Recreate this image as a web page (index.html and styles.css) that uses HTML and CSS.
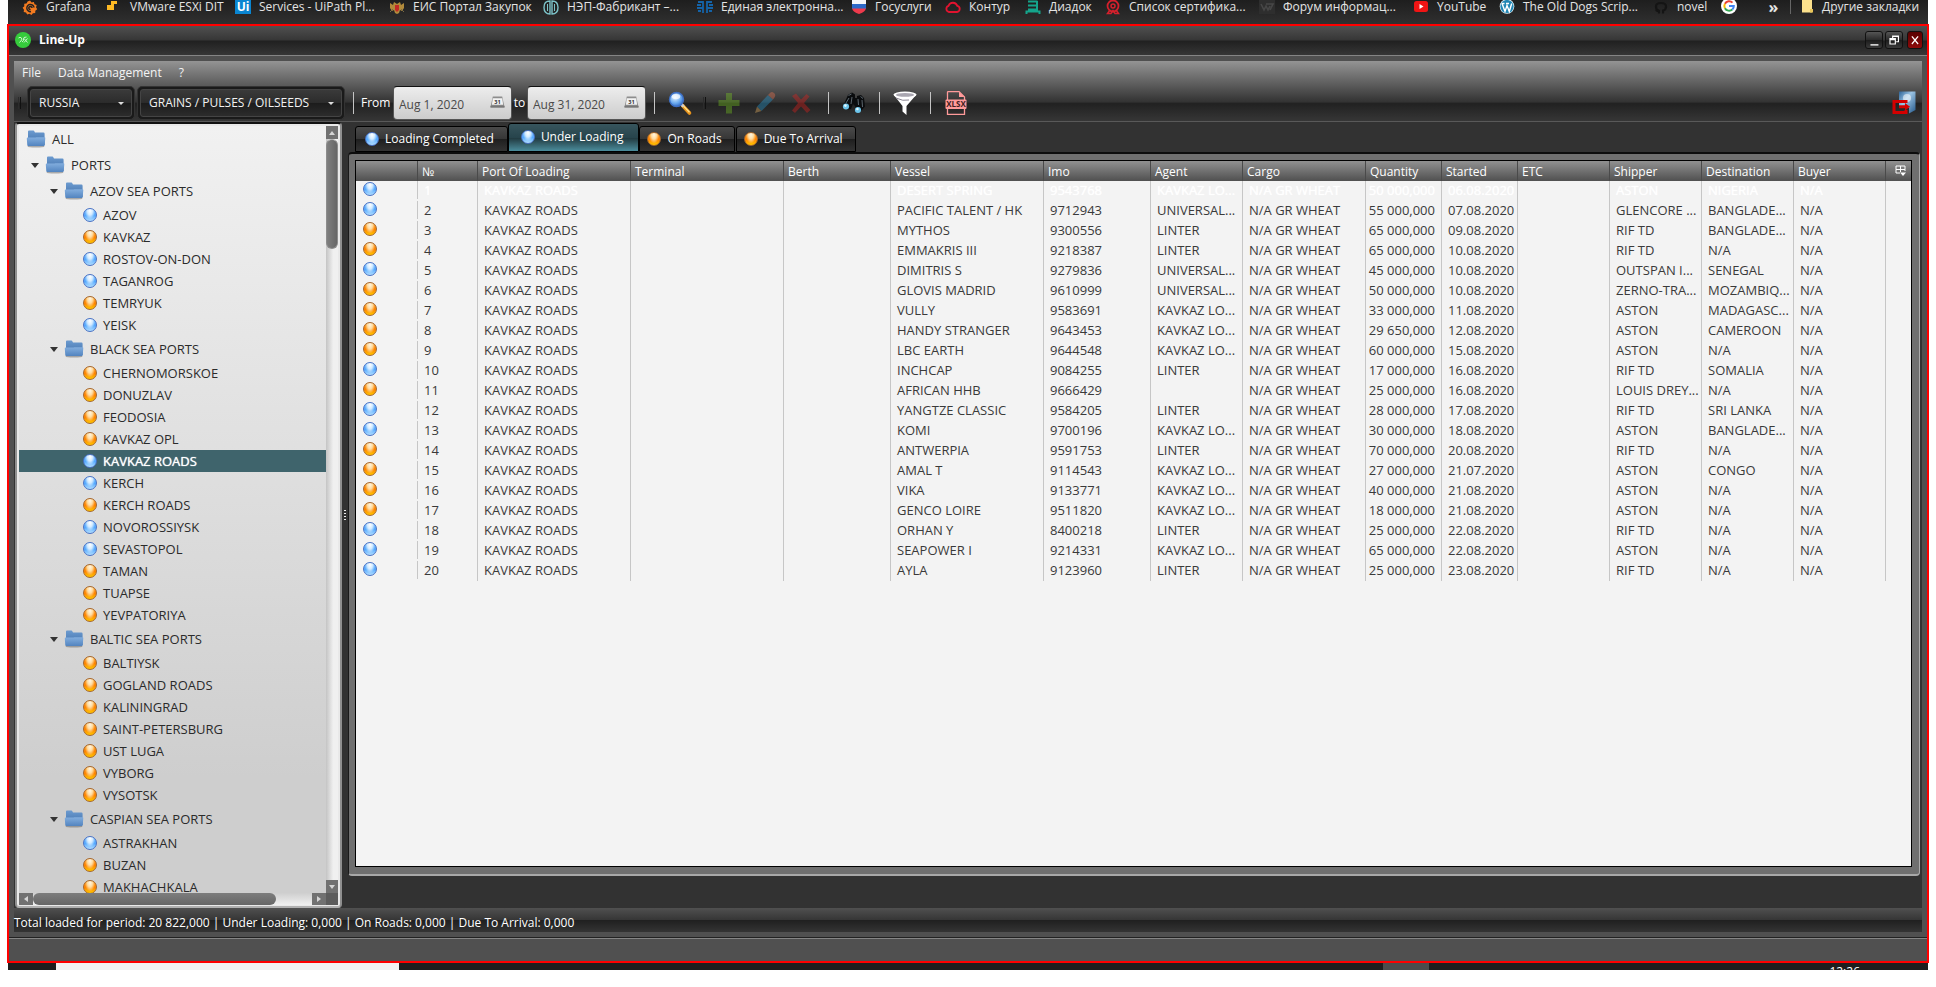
FILE: index.html
```html
<!DOCTYPE html>
<html lang="en">
<head>
<meta charset="utf-8">
<title>Line-Up</title>
<link rel="stylesheet" href="styles.css">
</head>
<body>
<svg class="defs" aria-hidden="true">
  <defs>
    <linearGradient id="gBack" x1="0" y1="0" x2="0" y2="1"><stop offset="0" stop-color="#6c9bd0"/><stop offset="1" stop-color="#3f6ea8"/></linearGradient>
    <linearGradient id="gFront" x1="0" y1="0" x2="0" y2="1"><stop offset="0" stop-color="#83aede"/><stop offset="1" stop-color="#5284bf"/></linearGradient>
    <radialGradient id="gLens" cx=".4" cy=".35" r=".7"><stop offset="0" stop-color="#e4f4ff"/><stop offset=".6" stop-color="#6aa9ee"/><stop offset="1" stop-color="#2a62c0"/></radialGradient>
    <linearGradient id="gDoor" x1="0" y1="0" x2="1" y2="1"><stop offset="0" stop-color="#2e6397"/><stop offset=".4" stop-color="#9cc4e4"/><stop offset="1" stop-color="#24588a"/></linearGradient>
    <symbol id="folder" viewBox="0 0 20 18">
      <ellipse cx="10" cy="16.4" rx="8.5" ry="1.2" fill="#555" opacity=".45"/>
      <path d="M2 1.500Q2 .6 3 .6H7.400Q8 .6 8.300 1.200L9 2.600H17.400Q18.600 2.600 18.600 3.800V15H2Z" fill="url(#gBack)"/>
      <path d="M.8 8.400Q.8 7.600 1.600 7.600H8.800Q9.600 7.600 10.200 7.200H18.600Q19.400 7.200 19.300 8L18.700 15.200Q18.600 16 17.800 16H2.200Q1.400 16 1.300 15.200Z" fill="url(#gFront)"/>
    </symbol>
  </defs>
</svg>

<nav class="bookmarks" aria-label="Bookmarks">
  <a href="#"><svg viewBox="0 0 16 16"><path d="M8 .6l1.600 1.800 2.300-.5.6 2.300 2.200.9-.7 2.200 1.200 2-1.900 1.400-.1 2.400-2.300.2L9.500 15 7.500 13.800 5.200 14.600 4 12.600 1.700 12 2 9.700.6 7.800 2.300 6.200 2.200 3.800 4.500 3.400 5.600 1.400Z" fill="#f47b20"/><path d="M12 7.500A3.600 3.600 0 1 0 9 11.600M10 8a1.600 1.600 0 1 0-1.400 1.600" fill="none" stroke="#242424" stroke-width="1.500"/></svg><span>Grafana</span></a>
  <a href="#"><svg viewBox="0 0 16 16"><path d="M5 1H11V4H8V10H1V5H5Z" fill="#fdb924"/></svg><span>VMware ESXi DIT</span></a>
  <a href="#"><b class="fav-ui">Ui</b><span>Services - UiPath Pl...</span></a>
  <a href="#"><svg viewBox="0 0 16 16"><path d="M1 3l3 2 1-3 3 2 3-2 1 3 3-2v5l-2 3-2-1-1 3-2 1-2-1-1-3-2 1-2-3Z" fill="#b18a3b"/><path d="M6 5h4v5l-2 2-2-2Z" fill="#c22a25"/><path d="M1 12l3-3M15 12l-3-3" stroke="#7a6a45"/></svg><span>ЕИС Портал Закупок</span></a>
  <a href="#"><svg viewBox="0 0 16 16"><path d="M7 1Q1 1 1 7.500T7 14ZM9 1Q15 1 15 7.500T9 14Z" fill="none" stroke="#7cc3c9" stroke-width="1.400"/><path d="M4.500 4v7M11.500 4v7" stroke="#7cc3c9"/></svg><span>НЭП-Фабрикант –...</span></a>
  <a href="#"><svg viewBox="0 0 16 16"><path d="M1 2h5v11M15 2h-5v11M0 5h4M16 5h-4M0 8h6M16 8h-6M1 11h3M15 11h-3" fill="none" stroke="#1463a8" stroke-width="1.800"/></svg><span>Единая электронна...</span></a>
  <a href="#"><svg viewBox="0 0 16 16"><path d="M1 0H15V5H1Z" fill="#f4f6fa"/><path d="M1 4H15V9H1Z" fill="#2c68c8"/><path d="M1 8.500H15Q14 12 8 14Q2 12 1 8.500Z" fill="#ee3a4c"/></svg><span>Госуслуги</span></a>
  <a href="#"><svg viewBox="0 0 16 16"><path d="M4 12a3.200 3.200 0 0 1-.4-6.200 4.600 4.600 0 0 1 8.700.1A3.100 3.100 0 0 1 12 12Z" fill="none" stroke="#e2132f" stroke-width="1.800"/></svg><span>Контур</span></a>
  <a href="#"><svg viewBox="0 0 16 16"><path d="M3 1.500H12.500M3 5.500H12.500M3 9.500H12.500M12 1V11M1.500 14V11.500H14.500V14" fill="none" stroke="#14a58c" stroke-width="2"/></svg><span>Диадок</span></a>
  <a href="#"><svg viewBox="0 0 16 16"><circle cx="8" cy="6" r="5.500" fill="none" stroke="#d5202c" stroke-width="1.800"/><circle cx="8" cy="6" r="2" fill="none" stroke="#d5202c" stroke-width="1.500"/><path d="M5 10L2.500 13.500H6L8 10.500 10 13.500h3.500L11 10" fill="none" stroke="#d5202c" stroke-width="1.500"/></svg><span>Список сертифика...</span></a>
  <a href="#"><svg viewBox="0 0 16 16"><path d="M0 0H16V14H0Z" fill="#2e2e2e"/><path d="M2 4l3 6 2-4 2 4 2-4M7 4h7l-3 6" fill="none" stroke="#474747" stroke-width="1.600"/></svg><span>Форум информац...</span></a>
  <a href="#"><svg viewBox="0 0 16 16"><rect x="1" y="1" width="14" height="11" rx="2.500" fill="#f01414"/><path d="M6.500 4L10.500 6.500 6.500 9Z" fill="#fff"/></svg><span>YouTube</span></a>
  <a href="#"><svg viewBox="0 0 16 16"><circle cx="8" cy="6.500" r="7.300" fill="#e8f4fa"/><circle cx="8" cy="6.500" r="6.600" fill="#2186b4"/><path d="M3 3.500l3 8 2-6 2.300 6 2.400-8M2.500 3.500h3M7 3.500h3" fill="none" stroke="#fff" stroke-width="1.400"/></svg><span>The Old Dogs Scrip...</span></a>
  <a href="#"><svg viewBox="0 0 16 16"><path d="M6 13.500V11Q3.500 11.500 3 9.500M10 13.500v-3Q13 10 13 6.500 13 3 8 3T3 6.500Q3 10 6 10.500" fill="none" stroke="#141414" stroke-width="2.200"/></svg><span>novel</span></a>
  <a href="#" aria-label="Google"><svg viewBox="0 0 16 16"><circle cx="8" cy="6" r="8" fill="#fff"/><path d="M11.500 2.600A4.800 4.800 0 0 0 3.900 3.800" fill="none" stroke="#ea4335" stroke-width="2"/><path d="M3.900 3.800a4.800 4.800 0 0 0 0 4.400" fill="none" stroke="#fbbc05" stroke-width="2"/><path d="M3.900 8.200a4.800 4.800 0 0 0 7.400 1.300" fill="none" stroke="#34a853" stroke-width="2"/><path d="M11.300 9.500A4.600 4.600 0 0 0 12.800 6H8" fill="none" stroke="#4285f4" stroke-width="2"/></svg></a>
  <button type="button" class="more">»</button>
  <a href="#" class="other"><svg viewBox="0 0 16 16"><path d="M3 -2H13V12.500H3Z" fill="#fbe08c"/><path d="M11 9h3v3.500h-3Z" fill="#e9c65a"/></svg><span>Другие закладки</span></a>
</nav>

<main class="window">
  <header class="titlebar">
    <svg class="logo" viewBox="0 0 16 16"><circle cx="8" cy="8" r="8" fill="#36cc3c"/><path d="M3.500 6Q5 4.500 6.500 6T4.500 10.500M7 10Q9 9 8.500 7T11.500 5M9 6.500l3.500 4M12.500 6.500L9 10.500" fill="none" stroke="#c9f5cb" stroke-width="1"/></svg>
    <h1>Line-Up</h1>
    <button type="button" class="win-btn" aria-label="Minimize"><svg viewBox="0 0 14 18"><path d="M3 14.500h9" stroke="#fff" stroke-width="1.500"/></svg></button>
    <button type="button" class="win-btn" aria-label="Restore"><svg viewBox="0 0 14 18"><path d="M5.500 7V4.500H12V11H9.500M5 5h7M2.500 7.500h6v6h-6ZM2.500 8.500h6" fill="none" stroke="#fff" stroke-width="1.300"/></svg></button>
    <button type="button" class="win-btn close" aria-label="Close"><svg viewBox="0 0 14 18"><path d="M3.500 5L10.500 13.500M10.500 5L3.500 13.500" stroke="#fff" stroke-width="1.400"/></svg></button>
  </header>

  <div class="client">
    <div class="bars">
      <nav class="menu"><button type="button">File</button><button type="button">Data Management</button><button type="button">?</button></nav>
      <div class="toolbar">
        <i class="grip"></i>
        <span class="combo country"><select aria-label="Country"><option>RUSSIA</option></select></span>
        <span class="combo product"><select aria-label="Product group"><option>GRAINS / PULSES / OILSEEDS</option></select></span>
        <i class="sep"></i>
        <label class="date"><span>From</span><input type="text" value="Aug 1, 2020"><svg viewBox="0 0 16 14"><path d="M3 1h10l2.500 11.500H.5Z" fill="#8d8d8d"/><path d="M3 3h10l1 7H2Z" fill="#f3f3f3"/><path d="M.5 11h15v2H.5Z" fill="#777"/><text x="8" y="9.500" class="cal">31</text></svg></label>
        <label class="date"><span>to</span><input type="text" value="Aug 31, 2020"><svg viewBox="0 0 16 14"><path d="M3 1h10l2.500 11.500H.5Z" fill="#8d8d8d"/><path d="M3 3h10l1 7H2Z" fill="#f3f3f3"/><path d="M.5 11h15v2H.5Z" fill="#777"/><text x="8" y="9.500" class="cal">31</text></svg></label>
        <i class="sep"></i>
        <button type="button" class="tool first" aria-label="Search"><svg viewBox="0 0 24 24"><path d="M14.500 14.500L21.500 22" stroke="#e8931c" stroke-width="3.600" stroke-linecap="round"/><path d="M15.500 15L21.500 21.300" stroke="#ffe28a" stroke-width="1.300"/><path d="M12.500 12.500l3 3" stroke="#ccc" stroke-width="3"/><circle cx="8.500" cy="8.500" r="7" fill="url(#gLens)" stroke="#3e6fc4" stroke-width="1.400"/><ellipse cx="8" cy="5.600" rx="4.200" ry="2.600" fill="#fff" opacity=".7"/></svg></button>
        <i class="grip small"></i>
        <button type="button" class="tool" aria-label="Add" disabled><svg viewBox="0 0 24 24"><path d="M9 2h6v7h7.500v6H15v7.500H9V15H1.500V9H9Z" fill="#7ed321"/></svg></button>
        <button type="button" class="tool" aria-label="Edit" disabled><svg viewBox="0 0 24 24"><path d="M2 22l2-6.500 4.500 4.500Z" fill="#ffc26b"/><path d="M4 15.500L15 4l5 4.500L8.500 20Z" fill="#2ba8e6"/><path d="M15 4l2.500-2.600Q19 .5 21 2t.8 4L20 8.500Z" fill="#ff7b54"/></svg></button>
        <button type="button" class="tool" aria-label="Delete" disabled><svg viewBox="0 0 24 24"><path d="M3 5l4-2.500 5 6L17.500 3l3 2.500L15 12l6.500 7-3.500 3-6-6.500L6 22l-3-2.500L9 12Z" fill="#f0201c"/></svg></button>
        <i class="sep wide"></i>
        <button type="button" class="tool" aria-label="Find"><svg viewBox="0 0 24 24"><path d="M6 4l4-2.500 3 2v3.500h2V5l4-1 3 3 1 8.500-4 4.500h-4l-2-5-2-2-2 5-4 .5-4-3.500Z" fill="#0a0c0e"/><path d="M6.500 4.500l3-1.500M18.500 5.500l2.500 2M7 7l-3 5M16 8l.500 6M10 6l-1 7M20 9l.500 7" stroke="#5c666e" stroke-width="1"/><ellipse cx="4" cy="15.500" rx="3.100" ry="3" fill="#6cc4ea"/><ellipse cx="16" cy="19" rx="3.100" ry="3" fill="#6cc4ea"/><circle cx="3.400" cy="14.600" r="1.300" fill="#e4f8ff"/><circle cx="15.400" cy="18" r="1.300" fill="#e4f8ff"/></svg></button>
        <i class="sep"></i>
        <button type="button" class="tool" aria-label="Filter"><svg viewBox="0 0 24 24"><path d="M.5 3.500L9.500 15v5.500L13.500 24V15L23.500 3.500Z" fill="#fff"/><ellipse cx="12" cy="3.800" rx="11.500" ry="3.300" fill="#fff"/><ellipse cx="12" cy="3.900" rx="9" ry="1.900" fill="#a9a6b0"/><path d="M3 7Q10 10.500 16 9" fill="none" stroke="#8c8794" stroke-width="1"/></svg></button>
        <i class="sep"></i>
        <button type="button" class="tool" aria-label="Export to Excel"><svg viewBox="0 0 24 24"><path d="M3.500 9V1.200Q3.500 .6 4.100 .6H15L20.500 6V9M3.500 17v6.400H20.500V17" fill="none" stroke="#ff9a9a" stroke-width="1.300"/><path d="M15 .6V6H20.500Z" fill="#ff9a9a"/><rect x="1.500" y="8.500" width="21" height="9.500" rx="1" fill="#ff9a9a"/><text x="12" y="16" class="xlsx">XLSX</text></svg></button>
        <button type="button" class="tool exit" aria-label="Exit"><svg viewBox="0 0 24 24"><path d="M7 .5H23.500V19L17 22.500V17H7Z" fill="url(#gDoor)"/><circle cx="15" cy="7" r="4" fill="#fff" opacity=".55"/><path d="M14 12V10.500H2V21.500H14V19M7 15.800H15" fill="none" stroke="#d40000" stroke-width="3"/><path d="M13 12L18 15.800 13 19.500Z" fill="#d40000"/></svg></button>
      </div>
    </div>

    <div class="work">
      <aside class="tree">
        <div class="tree-list">
          <div class="node l0"><svg><use href="#folder"/></svg>ALL</div>
          <div class="node l1 open"><svg><use href="#folder"/></svg>PORTS</div>
          <div class="node l2 open"><svg><use href="#folder"/></svg>AZOV SEA PORTS</div>
          <div class="leaf"><i class="orb blue"></i>AZOV</div>
          <div class="leaf"><i class="orb"></i>KAVKAZ</div>
          <div class="leaf"><i class="orb blue"></i>ROSTOV-ON-DON</div>
          <div class="leaf"><i class="orb blue"></i>TAGANROG</div>
          <div class="leaf"><i class="orb"></i>TEMRYUK</div>
          <div class="leaf"><i class="orb blue"></i>YEISK</div>
          <div class="node l2 open"><svg><use href="#folder"/></svg>BLACK SEA PORTS</div>
          <div class="leaf"><i class="orb"></i>CHERNOMORSKOE</div>
          <div class="leaf"><i class="orb"></i>DONUZLAV</div>
          <div class="leaf"><i class="orb"></i>FEODOSIA</div>
          <div class="leaf"><i class="orb"></i>KAVKAZ OPL</div>
          <div class="leaf selected"><i class="orb blue"></i>KAVKAZ ROADS</div>
          <div class="leaf"><i class="orb blue"></i>KERCH</div>
          <div class="leaf"><i class="orb"></i>KERCH ROADS</div>
          <div class="leaf"><i class="orb blue"></i>NOVOROSSIYSK</div>
          <div class="leaf"><i class="orb blue"></i>SEVASTOPOL</div>
          <div class="leaf"><i class="orb"></i>TAMAN</div>
          <div class="leaf"><i class="orb"></i>TUAPSE</div>
          <div class="leaf"><i class="orb"></i>YEVPATORIYA</div>
          <div class="node l2 open"><svg><use href="#folder"/></svg>BALTIC SEA PORTS</div>
          <div class="leaf"><i class="orb"></i>BALTIYSK</div>
          <div class="leaf"><i class="orb"></i>GOGLAND ROADS</div>
          <div class="leaf"><i class="orb"></i>KALININGRAD</div>
          <div class="leaf"><i class="orb"></i>SAINT-PETERSBURG</div>
          <div class="leaf"><i class="orb"></i>UST LUGA</div>
          <div class="leaf"><i class="orb"></i>VYBORG</div>
          <div class="leaf"><i class="orb"></i>VYSOTSK</div>
          <div class="node l2 open"><svg><use href="#folder"/></svg>CASPIAN SEA PORTS</div>
          <div class="leaf"><i class="orb blue"></i>ASTRAKHAN</div>
          <div class="leaf"><i class="orb"></i>BUZAN</div>
          <div class="leaf"><i class="orb"></i>MAKHACHKALA</div>
        </div>
        <div class="vscroll"><i class="arrow up"></i><div class="track"><div class="thumb"></div></div><i class="arrow down"></i></div>
        <div class="hscroll"><i class="arrow left"></i><div class="track"><div class="thumb"></div></div><i class="arrow right"></i></div>
        <i class="corner"></i>
      </aside>
      <div class="splitter"><i></i><i></i><i></i><i></i></div>

      <section class="content">
        <div class="tabs" role="tablist">
          <button type="button" role="tab"><i class="orb blue"></i>Loading Completed</button>
          <button type="button" role="tab" class="active" aria-selected="true"><i class="orb blue"></i>Under Loading</button>
          <button type="button" role="tab"><i class="orb"></i>On Roads</button>
          <button type="button" role="tab"><i class="orb"></i>Due To Arrival</button>
        </div>
        <div class="panel">
          <div class="grid">
            <table>
              <colgroup><col class="c-ico"><col class="c-no"><col class="c-l"><col class="c-l"><col class="c-m"><col class="c-l"><col class="c-m"><col class="c-s"><col class="c-cargo"><col class="c-xs"><col class="c-xs"><col class="c-s"><col class="c-s"><col class="c-s"><col class="c-s"><col></colgroup>
              <thead><tr><th></th><th>№</th><th>Port Of Loading</th><th>Terminal</th><th>Berth</th><th>Vessel</th><th>Imo</th><th>Agent</th><th>Cargo</th><th>Quantity</th><th>Started</th><th>ETC</th><th>Shipper</th><th>Destination</th><th>Buyer</th><th class="pick"><button type="button" aria-label="Choose columns"><svg viewBox="0 0 12 12"><path d="M1 1h9v3.500H1ZM1 4.500V8h4M5.500 1v6M1 4.500h9V6" fill="none" stroke="#fff"/><path d="M5 7.500h6L8 11Z" fill="#fff"/></svg></button></th></tr></thead>
              <tbody>
<tr class="current"><td><i class="orb blue"></i></td><td>1</td><td>KAVKAZ ROADS</td><td></td><td></td><td>DESERT SPRING</td><td>9543768</td><td>KAVKAZ LO...</td><td>N/A GR WHEAT</td><td>50 000,000</td><td>06.08.2020</td><td></td><td>ASTON</td><td>NIGERIA</td><td>N/A</td><td></td></tr>
<tr><td><i class="orb blue"></i></td><td>2</td><td>KAVKAZ ROADS</td><td></td><td></td><td>PACIFIC TALENT / HK</td><td>9712943</td><td>UNIVERSAL...</td><td>N/A GR WHEAT</td><td>55 000,000</td><td>07.08.2020</td><td></td><td>GLENCORE ...</td><td>BANGLADE...</td><td>N/A</td><td></td></tr>
<tr><td><i class="orb"></i></td><td>3</td><td>KAVKAZ ROADS</td><td></td><td></td><td>MYTHOS</td><td>9300556</td><td>LINTER</td><td>N/A GR WHEAT</td><td>65 000,000</td><td>09.08.2020</td><td></td><td>RIF TD</td><td>BANGLADE...</td><td>N/A</td><td></td></tr>
<tr><td><i class="orb"></i></td><td>4</td><td>KAVKAZ ROADS</td><td></td><td></td><td>EMMAKRIS III</td><td>9218387</td><td>LINTER</td><td>N/A GR WHEAT</td><td>65 000,000</td><td>10.08.2020</td><td></td><td>RIF TD</td><td>N/A</td><td>N/A</td><td></td></tr>
<tr><td><i class="orb blue"></i></td><td>5</td><td>KAVKAZ ROADS</td><td></td><td></td><td>DIMITRIS S</td><td>9279836</td><td>UNIVERSAL...</td><td>N/A GR WHEAT</td><td>45 000,000</td><td>10.08.2020</td><td></td><td>OUTSPAN I...</td><td>SENEGAL</td><td>N/A</td><td></td></tr>
<tr><td><i class="orb"></i></td><td>6</td><td>KAVKAZ ROADS</td><td></td><td></td><td>GLOVIS MADRID</td><td>9610999</td><td>UNIVERSAL...</td><td>N/A GR WHEAT</td><td>50 000,000</td><td>10.08.2020</td><td></td><td>ZERNO-TRA...</td><td>MOZAMBIQ...</td><td>N/A</td><td></td></tr>
<tr><td><i class="orb"></i></td><td>7</td><td>KAVKAZ ROADS</td><td></td><td></td><td>VULLY</td><td>9583691</td><td>KAVKAZ LO...</td><td>N/A GR WHEAT</td><td>33 000,000</td><td>11.08.2020</td><td></td><td>ASTON</td><td>MADAGASC...</td><td>N/A</td><td></td></tr>
<tr><td><i class="orb"></i></td><td>8</td><td>KAVKAZ ROADS</td><td></td><td></td><td>HANDY STRANGER</td><td>9643453</td><td>KAVKAZ LO...</td><td>N/A GR WHEAT</td><td>29 650,000</td><td>12.08.2020</td><td></td><td>ASTON</td><td>CAMEROON</td><td>N/A</td><td></td></tr>
<tr><td><i class="orb"></i></td><td>9</td><td>KAVKAZ ROADS</td><td></td><td></td><td>LBC EARTH</td><td>9644548</td><td>KAVKAZ LO...</td><td>N/A GR WHEAT</td><td>60 000,000</td><td>15.08.2020</td><td></td><td>ASTON</td><td>N/A</td><td>N/A</td><td></td></tr>
<tr><td><i class="orb blue"></i></td><td>10</td><td>KAVKAZ ROADS</td><td></td><td></td><td>INCHCAP</td><td>9084255</td><td>LINTER</td><td>N/A GR WHEAT</td><td>17 000,000</td><td>16.08.2020</td><td></td><td>RIF TD</td><td>SOMALIA</td><td>N/A</td><td></td></tr>
<tr><td><i class="orb"></i></td><td>11</td><td>KAVKAZ ROADS</td><td></td><td></td><td>AFRICAN HHB</td><td>9666429</td><td></td><td>N/A GR WHEAT</td><td>25 000,000</td><td>16.08.2020</td><td></td><td>LOUIS DREY...</td><td>N/A</td><td>N/A</td><td></td></tr>
<tr><td><i class="orb blue"></i></td><td>12</td><td>KAVKAZ ROADS</td><td></td><td></td><td>YANGTZE CLASSIC</td><td>9584205</td><td>LINTER</td><td>N/A GR WHEAT</td><td>28 000,000</td><td>17.08.2020</td><td></td><td>RIF TD</td><td>SRI LANKA</td><td>N/A</td><td></td></tr>
<tr><td><i class="orb blue"></i></td><td>13</td><td>KAVKAZ ROADS</td><td></td><td></td><td>KOMI</td><td>9700196</td><td>KAVKAZ LO...</td><td>N/A GR WHEAT</td><td>30 000,000</td><td>18.08.2020</td><td></td><td>ASTON</td><td>BANGLADE...</td><td>N/A</td><td></td></tr>
<tr><td><i class="orb"></i></td><td>14</td><td>KAVKAZ ROADS</td><td></td><td></td><td>ANTWERPIA</td><td>9591753</td><td>LINTER</td><td>N/A GR WHEAT</td><td>70 000,000</td><td>20.08.2020</td><td></td><td>RIF TD</td><td>N/A</td><td>N/A</td><td></td></tr>
<tr><td><i class="orb"></i></td><td>15</td><td>KAVKAZ ROADS</td><td></td><td></td><td>AMAL T</td><td>9114543</td><td>KAVKAZ LO...</td><td>N/A GR WHEAT</td><td>27 000,000</td><td>21.07.2020</td><td></td><td>ASTON</td><td>CONGO</td><td>N/A</td><td></td></tr>
<tr><td><i class="orb"></i></td><td>16</td><td>KAVKAZ ROADS</td><td></td><td></td><td>VIKA</td><td>9133771</td><td>KAVKAZ LO...</td><td>N/A GR WHEAT</td><td>40 000,000</td><td>21.08.2020</td><td></td><td>ASTON</td><td>N/A</td><td>N/A</td><td></td></tr>
<tr><td><i class="orb"></i></td><td>17</td><td>KAVKAZ ROADS</td><td></td><td></td><td>GENCO LOIRE</td><td>9511820</td><td>KAVKAZ LO...</td><td>N/A GR WHEAT</td><td>18 000,000</td><td>21.08.2020</td><td></td><td>ASTON</td><td>N/A</td><td>N/A</td><td></td></tr>
<tr><td><i class="orb blue"></i></td><td>18</td><td>KAVKAZ ROADS</td><td></td><td></td><td>ORHAN Y</td><td>8400218</td><td>LINTER</td><td>N/A GR WHEAT</td><td>25 000,000</td><td>22.08.2020</td><td></td><td>RIF TD</td><td>N/A</td><td>N/A</td><td></td></tr>
<tr><td><i class="orb blue"></i></td><td>19</td><td>KAVKAZ ROADS</td><td></td><td></td><td>SEAPOWER I</td><td>9214331</td><td>KAVKAZ LO...</td><td>N/A GR WHEAT</td><td>65 000,000</td><td>22.08.2020</td><td></td><td>ASTON</td><td>N/A</td><td>N/A</td><td></td></tr>
<tr><td><i class="orb blue"></i></td><td>20</td><td>KAVKAZ ROADS</td><td></td><td></td><td>AYLA</td><td>9123960</td><td>LINTER</td><td>N/A GR WHEAT</td><td>25 000,000</td><td>23.08.2020</td><td></td><td>RIF TD</td><td>N/A</td><td>N/A</td><td></td></tr>
              </tbody>
            </table>
          </div>
        </div>
      </section>
    </div>
    <p class="status">Total loaded for period: 20 822,000 | Under Loading: 0,000 | On Roads: 0,000 | Due To Arrival: 0,000</p>
  </div>
  <footer class="window-foot"></footer>
</main>
<div class="taskbar"><i class="search"></i><i class="app"></i><time>12:26</time></div>
</body>
</html>
```
FILE: styles.css
```css
*, *::before, *::after { box-sizing: border-box; }
html, body { height: 100%; }
body {
  margin: 0;
  padding: 0 7px 17px;
  display: flex;
  flex-direction: column;
  background: #fff;
  font: 12px/20px "Open Sans", "Noto Sans", sans-serif;
  overflow: hidden;
}
button, select, input { font: inherit; color: inherit; border: 0; background: none; padding: 0; margin: 0; }
svg { display: block; flex: none; overflow: visible; }
.defs { position: absolute; width: 0; height: 0; }

/* Bookmarks */
.bookmarks {
  flex: none;
  height: 24px;
  margin: 0 1px;
  padding-left: 14px;
  display: grid;
  grid-template-columns: 84px 129px 154px 154px 154px 154px 94px 80px 80px 154px 154px 86px 154px 68px 40px auto 140px;
  justify-content: start;
  background: linear-gradient(#1e1e1e, #303030);
  color: #e4e4e4;
}
.bookmarks a { display: flex; gap: 8px; height: 16px; line-height: 14px; color: inherit; text-decoration: none; white-space: nowrap; }
.bookmarks svg { width: 16px; height: 16px; }
.fav-ui { width: 16px; height: 14px; background: #0a85d1; color: #fff; text-align: center; }
.more { width: 30px; height: 14px; line-height: 12px; border-right: 1px solid #666; padding-right: 4px; font-weight: 700; font-size: 16px; }
.bookmarks .other { padding-left: 8px; gap: 7px; }

/* Window */
.window { flex: 1; min-height: 0; display: flex; flex-direction: column; border: 2px solid #f00; background: #505050; color: #fff; }
.titlebar {
  flex: none;
  height: 30px;
  padding: 0 4px 1px 6px;
  display: flex;
  align-items: center;
  gap: 2px;
  background: linear-gradient(#505050, #363636 49%, #202020 51%, #363636);
  border-bottom: 1px solid #858585;
}
.logo { width: 16px; height: 16px; }
.titlebar h1 { flex: 1; margin: 0 0 0 6px; font-size: 12px; font-weight: 700; }
.win-btn { width: 18px; height: 18px; border: 1px solid #111; border-radius: 3px; background: linear-gradient(#555, #2a2a2a 50%, #1c1c1c 51%, #3a3a3a); }
.win-btn svg { width: 14px; height: 16px; margin: 0 auto; }
.win-btn.close { width: 16px; background: linear-gradient(#5a0000, #8e0a0a); margin-left: 2px; }
.client { flex: 1; min-height: 0; margin: 5px 5px; display: flex; flex-direction: column; background: #323232; }

.bars { flex: none; height: 61px; background: linear-gradient(#949494, #333 68%, #212121 71%, #363636); border-bottom: 1px solid #595959; }
.menu { display: flex; gap: 17px; height: 24px; padding: 2px 0 0 8px; line-height: 20px; align-items: flex-start; }
.menu button { color: #f4f4f4; }
.toolbar { display: flex; align-items: center; height: 36px; padding: 0 6px 0 4px; }
.grip { width: 3px; height: 12px; margin-right: 6px; border-right: 1px solid #111; border-left: 1px solid #2c2c2c; }
.combo { position: relative; height: 34px; padding: 2px; border-radius: 5px; border: 1px solid #333; background: #1a1a1a; }
.combo select { appearance: none; width: 100%; height: 28px; padding: 0 8px; border: 1px solid #444; border-radius: 3px; background: linear-gradient(#3a3a3a, #2b2b2b 50%, #1c1c1c 51%, #2c2c2c); color: #f2f2f2; }
.combo::after { content: ""; position: absolute; right: 10px; top: 15px; border: 3px solid transparent; border-top-color: #ddd; pointer-events: none; }
.country { width: 108px; margin-right: 2px; }
.product { width: 208px; }
.sep { width: 1px; height: 22px; margin: 0 7px 0 8px; background: #c4c4c4; }
.date { position: relative; display: flex; align-items: center; }
.date span { width: 32px; flex: none; }
.date + .date span { width: 15px; text-align: center; }
.date input { width: 119px; height: 34px; padding: 2px 5px 0; border: 1px solid #555; border-top-color: #111; border-radius: 4px; background: linear-gradient(#ededed, #ccc); color: #4a4a4a; }
.date svg { position: absolute; right: 7px; top: 9px; width: 15px; height: 14px; }
.cal { font: bold 6px "Open Sans", sans-serif; text-anchor: middle; fill: #333; }
.tool { width: 24px; height: 24px; margin: 0 6px; flex: none; }
.tool svg { width: 24px; height: 24px; }
.tool:disabled { opacity: .35; }
.tool + .sep { margin-left: 7px; }
.tool + .sep.wide { margin-left: 9px; }
.tool.exit { margin: 0 0 0 auto; }
.grip.small { margin: 0 5px; }
.xlsx { font: bold 8px "Open Sans", sans-serif; text-anchor: middle; fill: #402020; }

.work { flex: 1; min-height: 0; display: flex; padding-left: 1px; }

/* Tree */
.tree {
  width: 327px;
  flex: none;
  padding: 2px 2px 1px 2px;
  display: grid;
  grid-template: minmax(0, 1fr) 12px / minmax(0, 1fr) 12px;
  border: 2px solid #8f8f8f;
  border-top-color: #111;
  border-bottom-color: #b0b0b0;
  border-radius: 4px;
  background: #e9e9e9;
  color: #2b2b2b;
  font-size: 13px;
}
.tree-list { overflow: hidden; background: linear-gradient(#f1f1f1, #e9e9e9 20%, #cecece 85%, #cecece); }
.node, .leaf { display: flex; align-items: center; white-space: nowrap; }
.node { height: 26px; gap: 6px; }
.node svg { width: 20px; height: 18px; }
.node.open::before { content: ""; width: 8px; border: 4px solid transparent; border-top: 5px solid #333; border-bottom: 0; }
.l0 { padding-left: 7px; }
.l1 { padding-left: 12px; }
.l2 { padding-left: 31px; }
.leaf { height: 22px; gap: 6px; padding-left: 64px; }
.leaf.selected { background: #3f646c; color: #fff; text-shadow: 0 0 1px #fff; }
.orb { display: block; flex: none; width: 14px; height: 14px; border: 1px solid #a5662c; border-radius: 50%; background: radial-gradient(ellipse at 50% 15%, #fff5e2 0, #ffdca0 30%, transparent 60%), linear-gradient(#ff9a1e, #ff8400 55%, #ffc800); }
.orb.blue { border-color: #4a72c4; background: radial-gradient(ellipse at 50% 15%, #fff 0, #d3ebff 30%, transparent 60%), linear-gradient(#74b9ff, #55aaff 55%, #b5e0ff); }
.vscroll { display: flex; flex-direction: column; background: linear-gradient(90deg, #c4c4c4, #f0f0f0 60%); }
.vscroll .track, .hscroll .track { flex: 1; }
.vscroll .thumb { height: 110px; border: 1px solid #8c8c8c; border-top-color: #aaa; border-radius: 6px; background: linear-gradient(90deg, #7f7f7f, #666); }
.arrow { flex: none; display: flex; align-items: center; justify-content: center; background: #717171; }
.arrow::after { content: ""; border: 3px solid transparent; }
.up, .down { height: 13px; }
.left, .right { width: 14px; }
.up::after { border-bottom: 4px solid #d5d5d5; border-top: 0; }
.down::after { border-top: 4px solid #d5d5d5; border-bottom: 0; }
.left::after { border-right: 4px solid #d5d5d5; border-left: 0; }
.right::after { border-left: 4px solid #d5d5d5; border-right: 0; }
.hscroll { display: flex; background: linear-gradient(#cfcfcf, #efefef); }
.hscroll .thumb { width: 87%; height: 12px; border-radius: 6px; background: linear-gradient(#7d7d7d, #666); }
.corner { background: #5c5c5c; }
.splitter { width: 6px; flex: none; display: flex; flex-direction: column; align-items: center; justify-content: center; gap: 2px; }
.splitter i { width: 2px; height: 1px; background: #eee; }

/* Tabs and grid */
.content { flex: 1; min-width: 0; display: flex; flex-direction: column; padding: 0 2px 32px 0; }
.tabs { height: 30px; flex: none; display: flex; align-items: flex-end; padding-left: 7px; gap: 1px; }
.tabs button { display: flex; align-items: center; gap: 6px; height: 26px; padding: 0 12px 0 7px; border: 1px solid #000; border-radius: 3px 3px 0 0; background: linear-gradient(#4a4a4a, #363636 50%, #1f1f1f 52%, #333); white-space: nowrap; }
.tabs button:first-child { padding: 0 13px 0 9px; }
.tabs .active { height: 29px; margin: 0 -1px; padding: 0 15px 1px 12px; background: linear-gradient(#37555d, #27444c 50%, #21393f 52%, #4b8d9c); }
.panel { flex: 1; min-height: 0; padding: 6px 7px 7px 6px; border: 1px solid #1a1a1a; border-top: 2px solid #0c0c0c; border-right-color: #aaa; border-bottom: 2px solid #a8a8a8; border-radius: 4px; background: #6f6f6f; }
.grid { height: 100%; border: 1px solid #000; background: #f3f3f3; overflow: hidden; }
table { width: 100%; table-layout: fixed; border-collapse: separate; border-spacing: 0; color: #3a3a3a; font-size: 13px; }
th, td { height: 20px; padding: 0 0 0 6px; line-height: 18px; text-align: left; vertical-align: top; white-space: nowrap; overflow: hidden; border-right: 1px solid #c6c6c6; }
th { padding: 2px 0 0 4px; background: linear-gradient(#919191, #505050); border-right-color: #4a4a4a; color: #fff; font-size: 12px; font-weight: 400; }
th:last-child, td:last-child { border-right: 0; }
td:first-child { padding-left: 7px; border-right: 0; background: linear-gradient(#c6c6c6, #c6c6c6) 100% 0 / 1px 18px no-repeat; }
td .orb { margin-top: 1px; }
td:nth-child(10) { padding: 0 6px 0 0; text-align: right; }
.current { color: #fff; text-shadow: 0 0 1px #fff; }
.pick { padding: 4px 0 0 9px; line-height: 0; }
.pick svg { width: 12px; height: 12px; }
.c-ico { width: 62px; } .c-no { width: 60px; } .c-l { width: 153px; } .c-m { width: 107px; }
.c-s { width: 92px; } .c-cargo { width: 123px; } .c-xs { width: 76px; }

.status { flex: none; height: 24px; margin: 0; padding-top: 5px; line-height: 20px; background: linear-gradient(#505050, #363636 49%, #202020 52%, #343434); white-space: nowrap; }
.window-foot { flex: none; height: 24px; border-top: 1px solid #222; box-shadow: inset 0 1px #858585; }

/* Taskbar strip */
.taskbar { flex: none; height: 7px; margin: 0 1px; padding-left: 48px; display: flex; background: #1e1e1e; overflow: hidden; color: #fff; line-height: 18px; }
.search { width: 343px; background: #f2f2f2; }
.app { width: 46px; margin-left: 984px; background: #4c4c4c; }
.taskbar time { margin: 0 68px 0 auto; }
```
